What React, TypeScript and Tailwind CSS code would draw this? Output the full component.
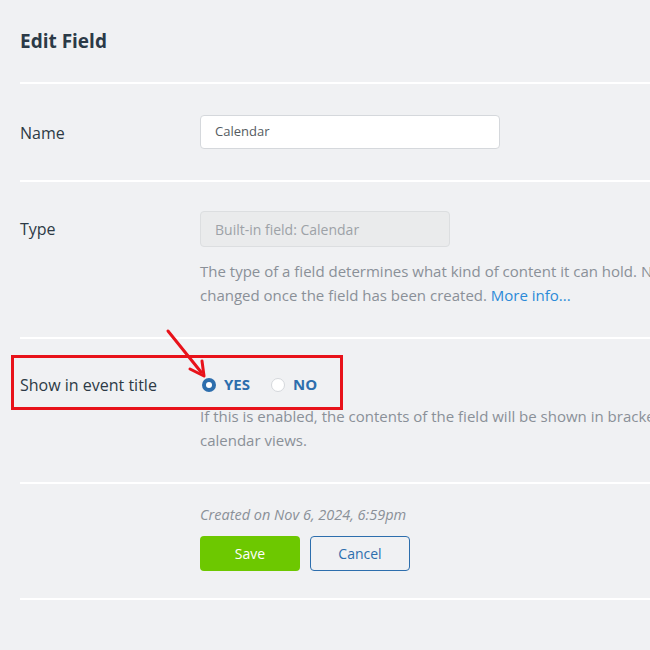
import React from "react";

export default function App() {
  return (
    <div
      className="relative w-[650px] h-[650px] overflow-hidden bg-[#f0f1f3]"
      style={{ fontFamily: '"Open Sans", "Noto Sans", sans-serif' }}
    >
      <div className="pl-[20px]">
        <div className="h-[82px] flex items-center">
          <h1 className="text-[19px] font-bold text-[#2b3a47] pt-[1px]">Edit Field</h1>
        </div>
        <div className="h-[2px] bg-white" />

        {/* Name */}
        <div className="flex py-[31px]">
          <div className="w-[180px] shrink-0 h-[34px] flex items-center text-[16px] text-[#2d3a45] pt-[1px]">Name</div>
          <div className="w-[300px] h-[34px] bg-white border border-[#d5d8dc] rounded-[4px] flex items-center pl-[14px] text-[13px] text-[#555b61]">
            Calendar
          </div>
        </div>
        <div className="h-[2px] bg-white" />

        {/* Type */}
        <div className="flex pt-[29px] pb-[30px]">
          <div className="w-[180px] shrink-0 h-[36px] flex items-center text-[16px] text-[#2d3a45]">Type</div>
          <div className="flex flex-col">
            <div className="w-[250px] h-[36px] bg-[#eaebec] border border-[#dcdee0] rounded-[4px] flex items-center pl-[14px] text-[14px] text-[#9da2a7]">
              Built-in field: Calendar
            </div>
            <div className="mt-[12px] text-[15px] leading-[24px] text-[#8a9098] whitespace-nowrap">
              <div>The type of a field determines what kind of content it can hold. Note that it cannot be</div>
              <div>
                changed once the field has been created. <span className="text-[#2b8ad8]">More info...</span>
              </div>
            </div>
          </div>
        </div>
        <div className="h-[2px] bg-white" />

        {/* Show in event title */}
        <div className="flex pt-[33px] pb-[30px]">
          <div className="w-[180px] shrink-0 h-[24px] flex items-center text-[16px] text-[#2d3a45] pt-[1px]">Show in event title</div>
          <div className="flex flex-col">
            <div className="h-[24px] flex items-center pt-[1px]">
              <span className="w-[14px] h-[14px] rounded-full bg-[#2d6ead] flex items-center justify-center ml-[2px]">
                <span className="w-[6px] h-[6px] rounded-full bg-white" />
              </span>
              <span className="ml-[8px] text-[15px] font-bold text-[#2d6ead]">YES</span>
              <span className="ml-[21px] w-[14px] h-[14px] rounded-full bg-white border border-[#d5d8dc]" />
              <span className="ml-[8px] text-[15px] font-bold text-[#2d6ead]">NO</span>
            </div>
            <div className="mt-[8px] text-[15px] leading-[24px] text-[#8a9098] whitespace-nowrap">
              <div>If this is enabled, the contents of the field will be shown in brackets after the event title in</div>
              <div>calendar views.</div>
            </div>
          </div>
        </div>
        <div className="h-[2px] bg-white" />

        {/* Footer */}
        <div className="flex pt-[19px] pb-[27px]">
          <div className="w-[180px] shrink-0" />
          <div className="flex flex-col">
            <div className="text-[14.5px] leading-[24px] italic text-[#8a9098]">Created on Nov 6, 2024, 6:59pm</div>
            <div className="mt-[9px] flex gap-[10px]">
              <button className="w-[100px] h-[35px] rounded-[4px] bg-[#6dc800] text-white text-[14px]">Save</button>
              <button className="w-[100px] h-[35px] rounded-[4px] border border-[#2d6ead] text-[#2d6ead] text-[14px]">Cancel</button>
            </div>
          </div>
        </div>
        <div className="h-[2px] bg-white" />
      </div>

      {/* Annotation box */}
      <div className="absolute left-[11px] top-[355px] w-[332px] h-[55px] border-[3px] border-[#e8121a] pointer-events-none" />
      {/* Annotation arrow */}
      <svg className="absolute left-0 top-0 pointer-events-none" width="650" height="650">
        <line x1="168" y1="331" x2="201" y2="372" stroke="#e8121a" strokeWidth="3" strokeLinecap="round" />
        <polyline points="190,369 204,376 202,361" fill="none" stroke="#e8121a" strokeWidth="3" strokeLinecap="round" strokeLinejoin="round" />
      </svg>
    </div>
  );
}
